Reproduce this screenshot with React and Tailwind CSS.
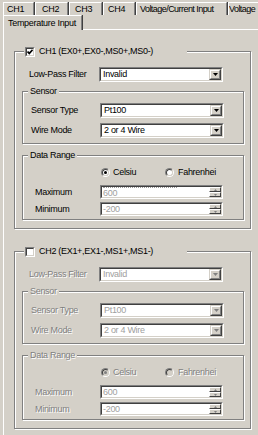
import React from 'react'

const ETCH = 'border border-[#808080] shadow-[inset_1px_1px_0_#fff,1px_1px_0_#fff]'
const SUNKEN_OUT = 'border border-t-[#808080] border-l-[#808080] border-r-white border-b-white'
const SUNKEN_IN = 'border border-t-[#404040] border-l-[#404040] border-r-[#d4d0c8] border-b-[#d4d0c8]'
const RAISED_OUT = 'border border-t-[#d4d0c8] border-l-[#d4d0c8] border-r-[#404040] border-b-[#404040]'
const RAISED_IN = 'border border-t-white border-l-white border-r-[#808080] border-b-[#808080]'
const GRAY_TXT = 'text-[#808080] [text-shadow:1px_1px_0_#fff]'

function Label({ on, className = '', children }) {
  return <span className={`${on ? 'text-black' : GRAY_TXT} whitespace-nowrap ${className}`}>{children}</span>
}

function Combo({ value, on, w = 'w-[124px]' }) {
  return (
    <div className={`${w} h-[15px] ${SUNKEN_OUT}`}>
      <div className={`h-full ${SUNKEN_IN} bg-white flex`}>
        <div className={`flex-1 flex items-center pl-[2px] ${on ? 'text-black' : 'text-[#a0a0a0]'}`}>{value}</div>
        <div className={`w-[12px] h-full ${RAISED_OUT} bg-[#d4d0c8]`}>
          <div className={`h-full ${RAISED_IN} flex items-center justify-center`}>
            <svg width="5" height="3" viewBox="0 0 5 3">
              <path d="M0 0h5L2.5 3z" fill={on ? '#000' : '#808080'} />
            </svg>
          </div>
        </div>
      </div>
    </div>
  )
}

function SpinBtn({ up }) {
  return (
    <div className="flex-1 bg-[#d4d0c8] border border-t-white border-l-white border-r-[#404040] border-b-[#404040] flex items-center justify-center">
      <svg width="3" height="2" viewBox="0 0 3 2">
        <path d={up ? 'M0 2h3L1.5 0z' : 'M0 0h3L1.5 2z'} fill="#808080" />
      </svg>
    </div>
  )
}

function Spin({ value, dotted }) {
  return (
    <div className={`w-[123px] h-[14px] ${SUNKEN_OUT}`}>
      <div className={`h-full ${SUNKEN_IN} bg-white flex`}>
        <div className="flex-1 flex flex-col justify-center pl-[1px] text-[#a0a0a0]">
          {dotted && <div className="w-[74px] h-0 border-t border-dotted border-[#9a9a9a] mb-[1px]" />}
          <span>{value}</span>
        </div>
        <div className="w-[12px] h-full flex flex-col">
          <SpinBtn up />
          <SpinBtn />
        </div>
      </div>
    </div>
  )
}

function Radio({ checked, on }) {
  return (
    <div className="w-[9px] h-[9px] rounded-full border border-t-[#808080] border-l-[#808080] border-r-white border-b-white">
      <div className={`w-full h-full rounded-full border border-t-[#404040] border-l-[#404040] border-r-[#d4d0c8] border-b-[#d4d0c8] flex items-center justify-center ${on ? 'bg-white' : 'bg-[#d4d0c8]'}`}>
        {checked && <div className={`w-[3px] h-[3px] rounded-full ${on ? 'bg-black' : 'bg-[#808080]'}`} />}
      </div>
    </div>
  )
}

function Check({ checked }) {
  return (
    <div className={`w-[10px] h-[10px] ${SUNKEN_OUT}`}>
      <div className={`w-full h-full ${SUNKEN_IN} bg-white flex items-center justify-center`}>
        {checked && (
          <svg width="6" height="6" viewBox="0 0 6 6">
            <path d="M0.5 2.5L2.3 4.4L5.6 0.8" stroke="#000" strokeWidth="1.7" fill="none" />
          </svg>
        )}
      </div>
    </div>
  )
}

function SubLegend({ on, children }) {
  return (
    <div className="-mt-[6px] ml-[5px] w-fit px-[2px] h-[11px] bg-[#d4d0c8] flex items-center">
      <Label on={on}>{children}</Label>
    </div>
  )
}

function Channel({ title, on, className = '' }) {
  return (
    <div className={`ml-[10px] w-[237px] ${ETCH} pb-[8px] ${className}`}>
      <div className="-mt-[6px] ml-[9px] w-[163px] h-[11px] bg-[#d4d0c8] flex items-center pl-[1px]">
        <Check checked={on} />
        <span className="ml-[4px] text-black whitespace-nowrap">{title}</span>
      </div>

      <div className="mt-[10px] h-[15px] flex items-center">
        <Label on={on} className="ml-[14px] w-[70px]">Low-Pass Filter</Label>
        <Combo value="Invalid" on={on} />
      </div>

      <div className={`mt-[9px] ml-[7px] w-[222px] ${ETCH} pb-[5px]`}>
        <SubLegend on={on}>Sensor</SubLegend>
        <div className="mt-[6px] h-[15px] flex items-center">
          <Label on={on} className="ml-[8px] w-[69px]">Sensor Type</Label>
          <Combo value="Pt100" on={on} />
        </div>
        <div className="mt-[5px] h-[15px] flex items-center">
          <Label on={on} className="ml-[8px] w-[69px]">Wire Mode</Label>
          <Combo value="2 or 4 Wire" on={on} />
        </div>
      </div>

      <div className={`mt-[11px] ml-[7px] w-[222px] ${ETCH} pb-[3px]`}>
        <SubLegend on={on}>Data Range</SubLegend>
        <div className="mt-[6px] h-[11px] flex items-center pl-[78px]">
          <div className="w-[64px] flex items-center">
            <Radio checked on={on} />
            <Label on={on} className="ml-[3px]">Celsiu</Label>
          </div>
          <Radio on={on} />
          <Label on={on} className="ml-[4px]">Fahrenhei</Label>
        </div>
        <div className="mt-[7px] h-[14px] flex items-center">
          <Label on={on} className="ml-[12px] w-[65px]">Maximum</Label>
          <Spin value="600" dotted={on} />
        </div>
        <div className="mt-[3px] h-[14px] flex items-center">
          <Label on={on} className="ml-[12px] w-[65px]">Minimum</Label>
          <Spin value="-200" />
        </div>
      </div>
    </div>
  )
}

const TAB = 'h-full border-t border-l border-white border-r border-r-[#808080] shadow-[1px_0_0_#404040] flex items-center whitespace-nowrap overflow-hidden shrink-0'

export default function App() {
  return (
    <div className="w-[258px] h-[435px] overflow-hidden bg-[#d4d0c8] font-['Liberation_Sans',Arial,sans-serif] text-[9px] tracking-[-0.3px] leading-none text-black">
      <div className="flex h-[13px] mt-[2px]">
        <div className={`${TAB} ml-[3px] w-[31px] pl-[3px]`}>CH1</div>
        <div className={`${TAB} ml-[1px] w-[33px] pl-[6px]`}>CH2</div>
        <div className={`${TAB} ml-[1px] w-[33px] pl-[5px]`}>CH3</div>
        <div className={`${TAB} ml-[1px] w-[32px] pl-[4px]`}>CH4</div>
        <div className={`${TAB} ml-[1px] w-[91px] pl-[3px] tracking-[-0.55px]`}>Voltage/Current Input</div>
        <div className={`${TAB} ml-[1px] w-[30px] pl-[0px] border-r-0 shadow-none tracking-[-0.55px]`}>Voltage</div>
      </div>
      <div className="flex h-[15px]">
        <div className="ml-[3px] w-[79px] h-full border-t border-l border-white border-r border-r-[#808080] shadow-[1px_0_0_#404040] flex items-center pl-[4px] whitespace-nowrap">
          Temperature Input
        </div>
        <div className="flex-1 ml-[1px] border-b border-white" />
      </div>
      <div className="ml-[3px] h-[420px] border-l border-white pt-[21px]">
        <Channel title="CH1 (EX0+,EX0-,MS0+,MS0-)" on />
        <Channel title="CH2 (EX1+,EX1-,MS1+,MS1-)" on={false} className="mt-[22px]" />
      </div>
    </div>
  )
}
